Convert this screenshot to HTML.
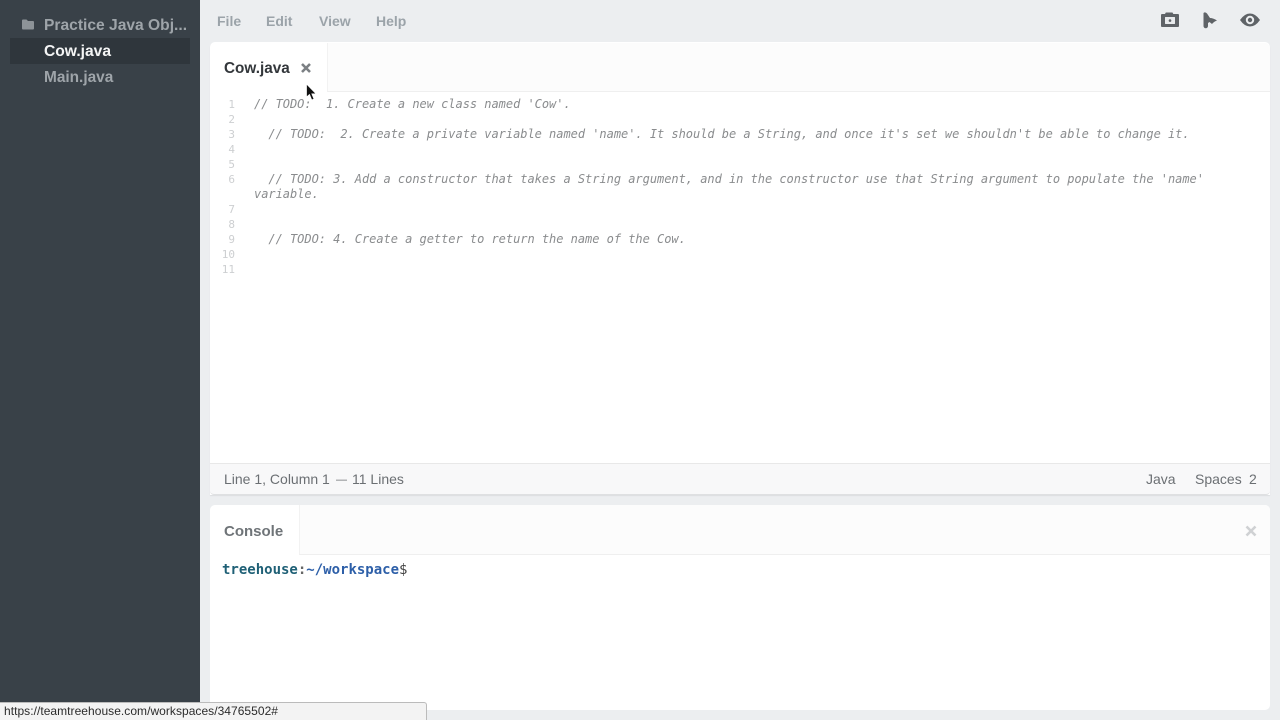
<!DOCTYPE html>
<html><head><meta charset="utf-8"><style>
*{box-sizing:border-box}
html,body{margin:0;padding:0;width:1280px;height:720px;overflow:hidden;background:#eceef0;font-family:"Liberation Sans",sans-serif}
.a{position:absolute;white-space:pre}
#side{left:0;top:0;width:200px;height:720px;background:#394148}
#sel{left:10px;top:38px;width:180px;height:26px;background:#2f363c}
.sf{font-size:15.6px;font-weight:bold;line-height:18px}
.menu{top:12px;font-size:14px;font-weight:bold;color:#9ba3a9;line-height:18px}
#ed{left:210px;top:42px;width:1060px;height:453px;background:#fff;border-radius:5px 5px 0 0;box-shadow:0 1px 1px #dcdde0}
#tabbar{left:327px;top:43px;width:943px;height:49px;background:#fcfcfc;border-bottom:1px solid #efefef;border-left:1px solid #f2f2f2;border-radius:0 5px 0 0}
#status{left:210px;top:463px;width:1060px;height:32px;background:#f8f8f9;border-top:1px solid #e8e8e8;border-bottom:1px solid #dfe0e2;border-radius:0 0 4px 4px}
.st{top:470px;font-size:14px;color:#6b6f73;line-height:18px}
#con{left:210px;top:505px;width:1060px;height:205px;background:#fff;border-radius:5px 5px 5px 5px}
#conbar{left:299px;top:505px;width:971px;height:50px;background:#fcfcfc;border-bottom:1px solid #efefef;border-left:1px solid #f2f2f2;border-radius:0 5px 0 0}
.ln{left:210px;width:25px;text-align:right;font:11px/15px "DejaVu Sans Mono",monospace;color:#cdcfd1}
.c{left:254px;font:italic 12px/15px "DejaVu Sans Mono",monospace;letter-spacing:-.028px;color:#8a8c8e}
#url{left:-1px;top:702px;width:428px;height:18px;background:#f3f3f3;border:1px solid #bbb;border-bottom:0;border-radius:0 3px 0 0;font-size:12px;letter-spacing:.04px;line-height:16px;color:#2c2c2c;padding-left:4px}
</style></head><body>
<div class="a" id="side"></div>
<div class="a" id="sel"></div>
<svg class="a" style="left:21px;top:18px" width="14" height="13" viewBox="0 0 14 13"><path d="M1 2.500Q1 1.500 2 1.500H5.500L7 3H12Q13 3 13 4V10.500Q13 11.500 12 11.500H2Q1 11.500 1 10.500Z" fill="#8d9398"/></svg>
<div class="a sf" style="left:44px;top:17px;color:#9ea4a9">Practice Java Obj...</div>
<div class="a sf" style="left:44px;top:43px;color:#f4f5f5">Cow.java</div>
<div class="a sf" style="left:44px;top:69px;font-size:15.4px;color:#9ea4a9">Main.java</div>

<div class="a menu" style="left:217px">File</div>
<div class="a menu" style="left:266px">Edit</div>
<div class="a menu" style="left:319px">View</div>
<div class="a menu" style="left:376px">Help</div>

<svg class="a" style="left:1160px;top:11px" width="20" height="18" viewBox="0 0 20 18"><path d="M2 3H5L5.800 1.500H12.500L13.300 3H18Q19 3 19 4V15Q19 16 18 16H2Q1 16 1 15V4Q1 3 2 3Z" fill="#5f6367"/><rect x="5" y="6" width="10" height="7" rx="0.500" fill="#e9ebed"/><circle cx="10" cy="9.600" r="1.300" fill="#5f6367"/></svg>
<svg class="a" style="left:1202px;top:11px" width="16" height="18" viewBox="0 0 16 18"><path d="M1.500 2Q3 0.500 5 2.500L8 7Q11 7 15 9.500Q12 10.500 10 13L7.500 11L6 12V15A2.200 2.200 0 0 1 1.500 15Z" fill="#5f6367"/></svg>
<svg class="a" style="left:1239px;top:12px" width="22" height="16" viewBox="0 0 22 16"><path fill-rule="evenodd" d="M1 8Q5.500 1.500 11 1.500T21 8Q16.500 14.500 11 14.500T1 8ZM11 3.800A4.200 4.200 0 1 0 11 12.200A4.200 4.200 0 1 0 11 3.800Z" fill="#5f6367"/><circle cx="11" cy="8" r="2.200" fill="#5f6367"/></svg>

<div class="a" id="ed"></div>
<div class="a" id="tabbar"></div>
<div class="a" style="left:224px;top:60px;font-size:15.3px;font-weight:bold;line-height:18px;color:#33373b">Cow.java</div>
<svg class="a" style="left:300px;top:62px" width="12" height="12" viewBox="0 0 12 12"><path d="M2 2L10 10M10 2L2 10" stroke="#7c8084" stroke-width="2.600"/></svg>

<div class="a ln" style="top:97px">1</div><div class="a ln" style="top:112px">2</div><div class="a ln" style="top:127px">3</div><div class="a ln" style="top:142px">4</div><div class="a ln" style="top:157px">5</div><div class="a ln" style="top:172px">6</div><div class="a ln" style="top:202px">7</div><div class="a ln" style="top:217px">8</div><div class="a ln" style="top:232px">9</div><div class="a ln" style="top:247px">10</div><div class="a ln" style="top:262px">11</div>
<div class="a c" style="top:97px">// TODO:  1. Create a new class named 'Cow'.</div>
<div class="a c" style="top:127px">  // TODO:  2. Create a private variable named 'name'. It should be a String, and once it's set we shouldn't be able to change it.</div>
<div class="a c" style="top:172px">  // TODO: 3. Add a constructor that takes a String argument, and in the constructor use that String argument to populate the 'name'</div>
<div class="a c" style="top:187px">variable.</div>
<div class="a c" style="top:232px">  // TODO: 4. Create a getter to return the name of the Cow.</div>

<svg class="a" style="left:305px;top:83px" width="13" height="19" viewBox="0 0 13 19"><path d="M1.500 1V14L4.500 11.500L6.800 17L9 16L6.800 10.800H11Z" fill="#111" stroke="#fff" stroke-width="0.700"/></svg>

<div class="a" id="status"></div>
<div class="a st" style="left:224px">Line 1, Column 1</div>
<div class="a st" style="left:336px;font-size:11px;top:471px">—</div>
<div class="a st" style="left:352px">11 Lines</div>
<div class="a st" style="left:1146px">Java</div>
<div class="a st" style="left:1195px">Spaces</div>
<div class="a st" style="left:1249px">2</div>

<div class="a" id="con"></div>
<div class="a" id="conbar"></div>
<div class="a" style="left:224px;top:523px;font-size:15px;font-weight:bold;line-height:18px;color:#6f7478">Console</div>
<svg class="a" style="left:1245px;top:525px" width="12" height="12" viewBox="0 0 12 12"><path d="M1.500 1.500L10.500 10.500M10.500 1.500L1.500 10.500" stroke="#cfd1d3" stroke-width="2.600"/></svg>
<div class="a" style="left:222px;top:563px;font:14px/15px 'DejaVu Sans Mono',monospace;color:#444"><b style="color:#1f6076">treehouse</b><b style="color:#666">:</b><b style="color:#2d5fa8">~/workspace</b>$</div>

<div class="a" id="url">https://teamtreehouse.com/workspaces/34765502#</div>
</body></html>
